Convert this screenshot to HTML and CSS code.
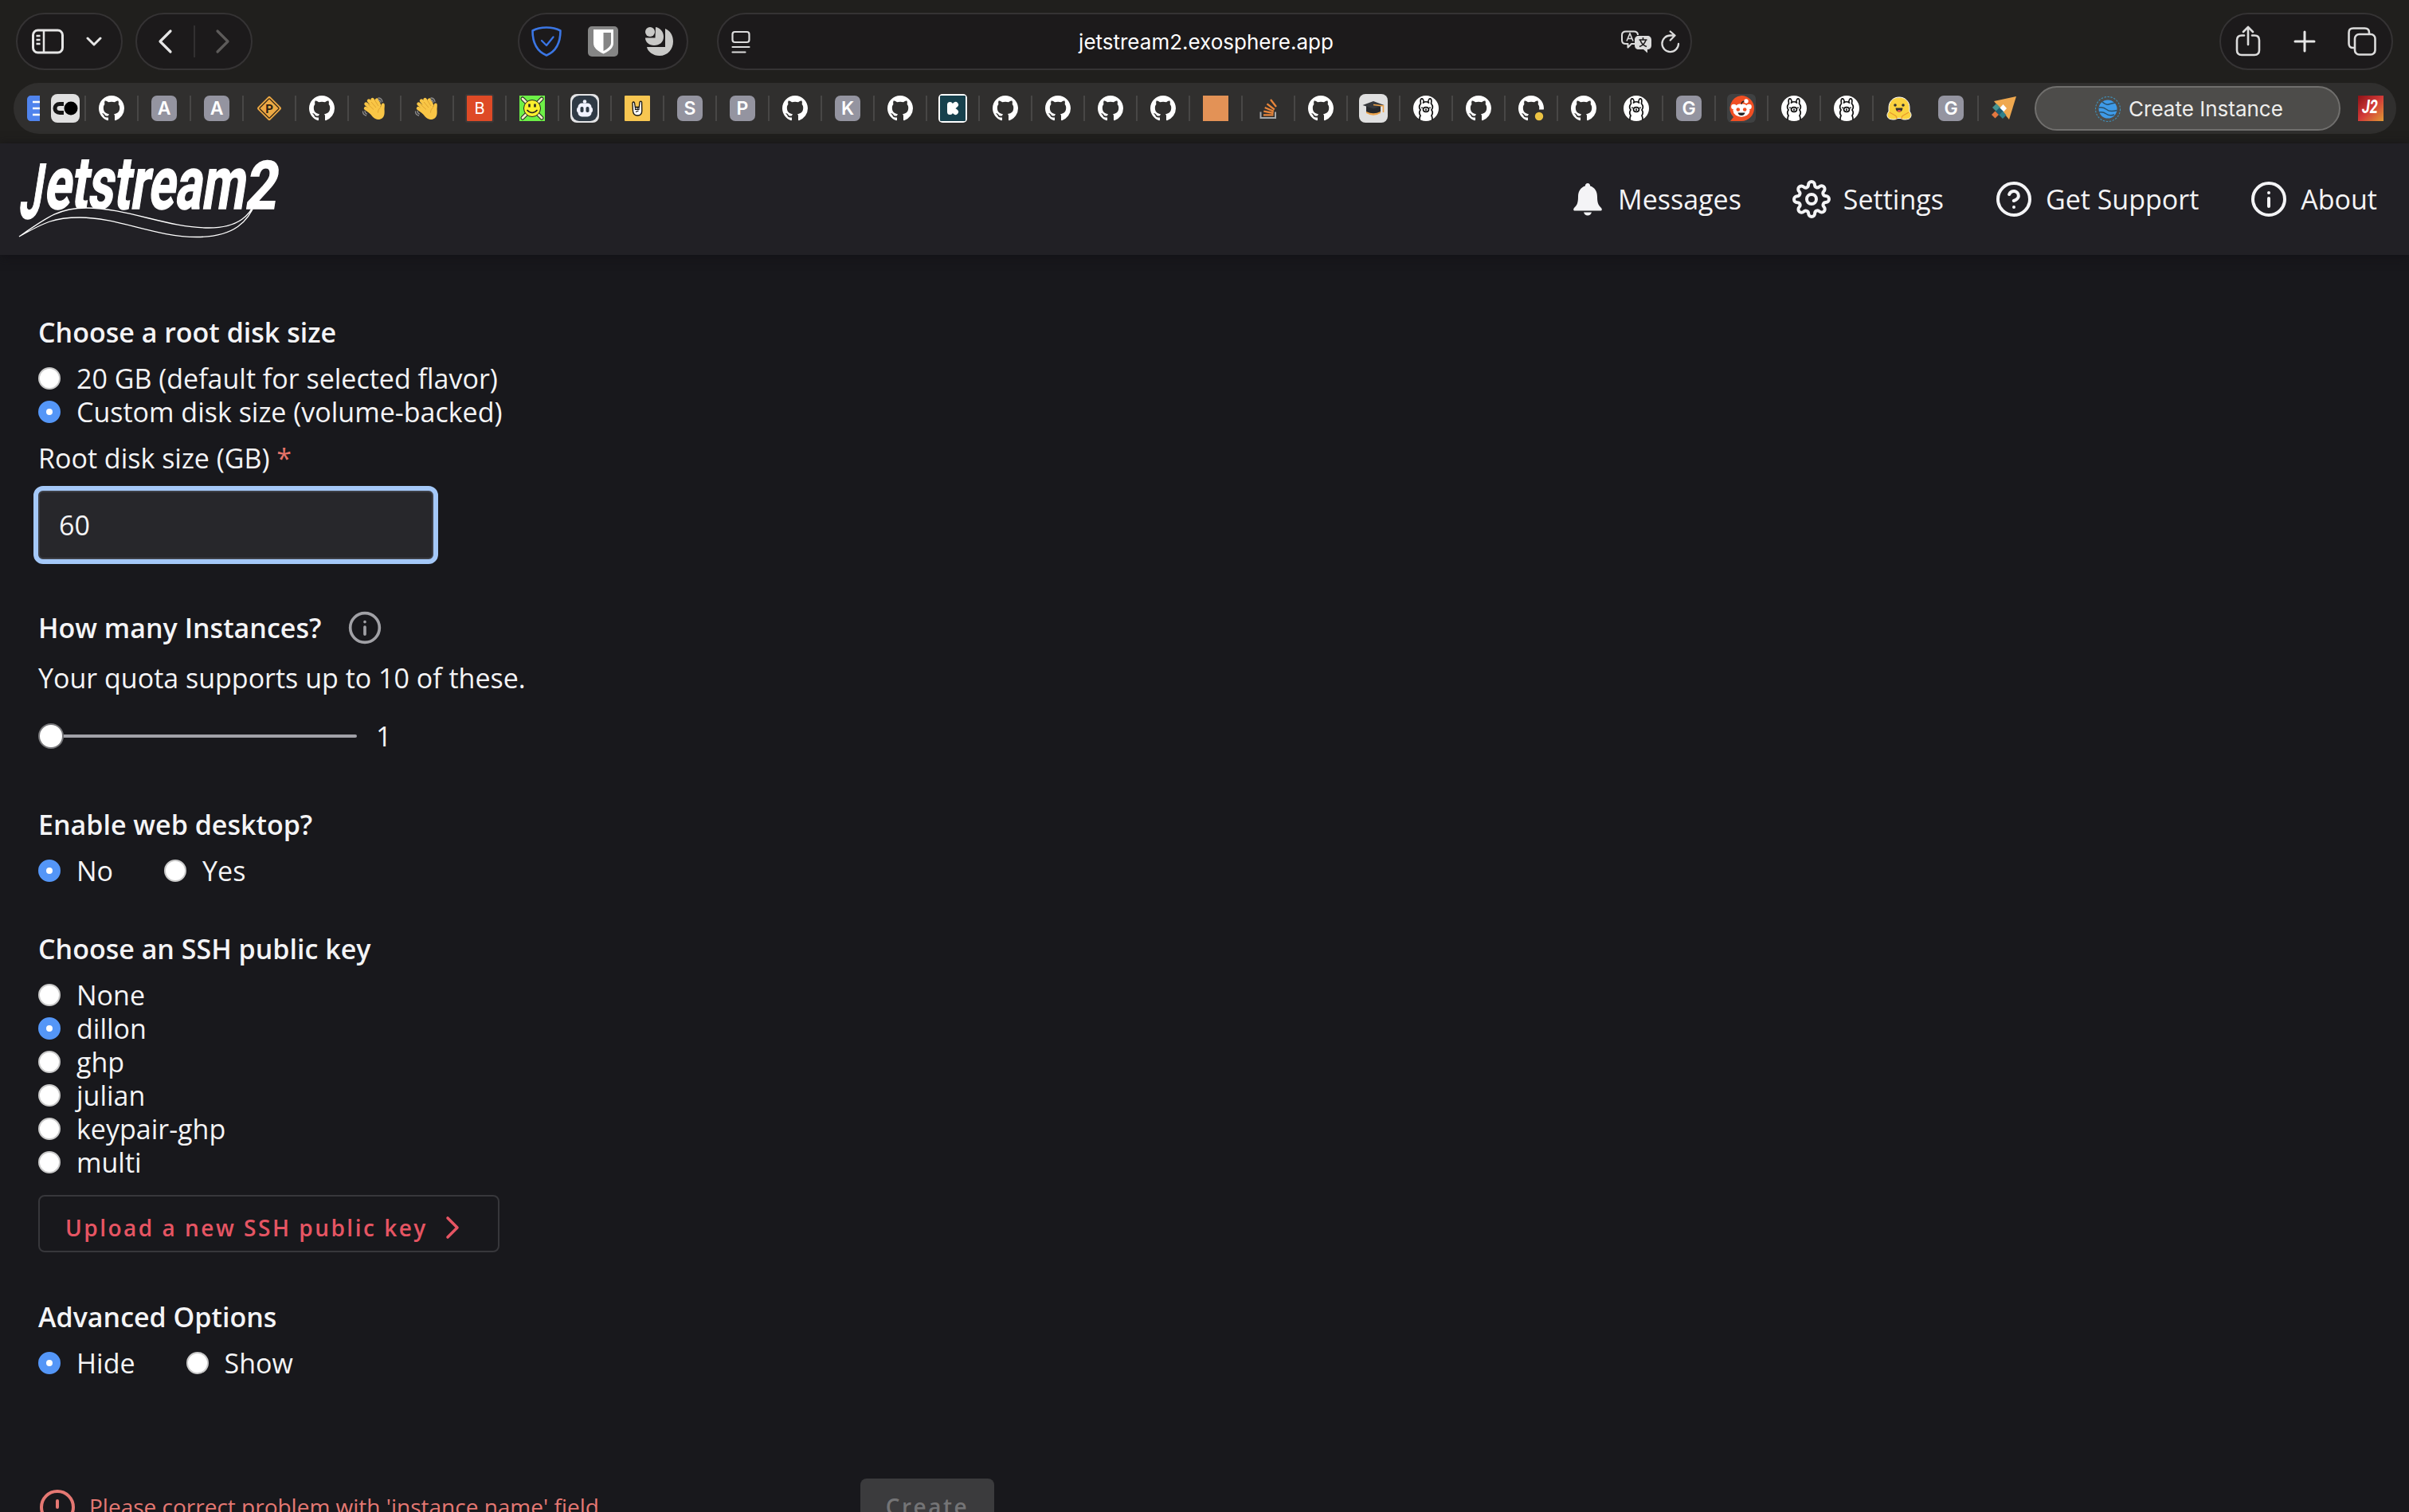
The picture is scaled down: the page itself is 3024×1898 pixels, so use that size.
FILE: index.html
```html
<!DOCTYPE html>
<html lang="en">
<head>
  <meta charset="utf-8">
  <title>Create Instance</title>
  <link rel="stylesheet" href="styles.css">
</head>
<body>
  <!-- shared icons -->
  <svg class="defs" width="0" height="0">
    <symbol id="github" viewBox="0 0 16 16"><path fill="#fff" d="M8 0C3.58 0 0 3.58 0 8c0 3.54 2.29 6.53 5.47 7.59.4.07.55-.17.55-.38 0-.19-.01-.82-.01-1.49-2.01.37-2.53-.49-2.69-.94-.09-.23-.48-.94-.82-1.13-.28-.15-.68-.52-.01-.53.63-.01 1.08.58 1.23.82.72 1.21 1.87.87 2.33.66.07-.52.28-.87.51-1.07-1.78-.2-3.64-.89-3.64-3.95 0-.87.31-1.59.82-2.15-.08-.2-.36-1.02.08-2.12 0 0 .67-.21 2.2.82.64-.18 1.32-.27 2-.27s1.36.09 2 .27c1.53-1.04 2.2-.82 2.2-.82.44 1.1.16 1.92.08 2.12.51.56.82 1.27.82 2.15 0 3.07-1.87 3.75-3.65 3.95.29.25.54.73.54 1.48 0 1.07-.01 1.93-.01 2.2 0 .21.15.46.55.38A8.01 8.01 0 0 0 16 8c0-4.42-3.58-8-8-8z"/></symbol>
    <symbol id="wave" viewBox="0 0 32 32">
      <path fill="none" stroke="#f9c646" stroke-width="4.400" stroke-linecap="round" d="M13.500 17L5.500 10.500M16 14.500L9 6.500M19 12.500L13.500 5M22 12L19 5.500M12 21L5 16"/>
      <path fill="#f9c646" d="M10 17.500L20 8.500q3 2 4 6c.3-3 1-5 3-5s2 2 1.700 5c-.5 3 .3 5-.2 8.500C28 28 24 30.500 20 30c-5-.5-8-6-11-9z"/>
      <path fill="none" stroke="#d89a2c" stroke-width=".8" d="M8 11l7 6.500M12 8l6 7M16.500 6l4.500 7M24 14.500c-2.500 2-3.500 4-3.500 7"/>
      <path fill="none" stroke="#8b8b8b" stroke-width="1.300" stroke-linecap="round" d="M21 3q4 0 5 4.500M21 5.500q2.500 0 3 3M1.500 20q0 4 4 5M4 19.500q0 2.500 2.500 3.500"/>
    </symbol>
    <symbol id="llama" viewBox="0 0 32 32">
      <circle cx="16" cy="16" r="16" fill="#fff"/>
      <g fill="none" stroke="#111" stroke-width="1.700" stroke-linecap="round">
        <path d="M9.500 10C8.500 6 9.500 3.500 11 3.800s2.300 3 2 5.200M22.500 10c1-4 0-6.500-1.500-6.200s-2.300 3-2 5.200M12.500 9q3.500-2.500 7 0M9.500 10q-3.500 4-.5 8-2.500 3.500 0 7-1 2-1 5M22.500 10q3.500 4 .5 8 2.500 3.500 0 7 1 2 1 5"/>
        <ellipse cx="16" cy="17.500" rx="3.500" ry="2.800"/>
        <path d="M16 17v1.200M11 15.200v.1M21 15.200v.1"/>
      </g>
    </symbol>
    <symbol id="info" viewBox="0 0 24 24"><g fill="none" stroke="currentColor" stroke-width="2" stroke-linecap="round"><circle cx="12" cy="12" r="10"/><path d="M12 16.500v-5M12 8v.01"/></g></symbol>
  </svg>

  <!-- browser window -->
  <div class="toolbar">
    <div class="pill pill-sidebar">
      <svg width="40" height="32" viewBox="0 0 40 32" fill="none" stroke="#e6e6e6" stroke-width="3"><rect x="1.500" y="2" width="37" height="28" rx="6"/><path d="M15 2v28M5.500 9h5M5.500 14h5M5.500 19h5" stroke-width="2.500"/></svg>
      <svg width="20" height="14" viewBox="0 0 20 14" fill="none" stroke="#e6e6e6" stroke-width="3" stroke-linecap="round" stroke-linejoin="round"><path d="M2 3l8 8 8-8"/></svg>
    </div>
    <div class="pill pill-nav">
      <svg width="20" height="32" viewBox="0 0 20 32" fill="none" stroke="#e6e6e6" stroke-width="3.200" stroke-linecap="round" stroke-linejoin="round"><path d="M17 3L4 16l13 13"/></svg>
      <span class="pill-line"></span>
      <svg width="20" height="32" viewBox="0 0 20 32" fill="none" stroke="#5d5b5a" stroke-width="3.200" stroke-linecap="round" stroke-linejoin="round"><path d="M3 3l13 13L3 29"/></svg>
    </div>
    <div class="pill pill-ext">
      <svg width="38" height="38" viewBox="0 0 38 38" fill="none" stroke="#3b76e4" stroke-width="2.600" stroke-linejoin="round" stroke-linecap="round"><path d="M19 1.500c6 0 13 1.500 17.500 4C36.500 20 32 31 19 36.500 6 31 1.500 20 1.500 5.500 6 3 13 1.500 19 1.500z"/><path d="M13 18l6 6 8.500-10.500" stroke-width="2.300"/></svg>
      <svg width="38" height="38" viewBox="0 0 38 38"><rect width="38" height="38" rx="5" fill="#858585"/><path fill="#fff" d="M7 4h25v17c0 6-5 10-12.500 13.500C12 31 7 27 7 21z"/><path fill="#858585" d="M19.500 8H29v13c0 4-4 7-9.500 10z"/></svg>
      <svg width="38" height="38" viewBox="0 0 38 38" fill="#c9c9c7"><circle cx="7" cy="7" r="6"/><path d="M14 1c6 1 10 6 10 12 0 7-5 11-12 11C6 24 1 20 1 14.500h12.500z"/><path d="M26 3c7 3 10 9 10 16 0 10-7 18-17 18-8 0-15-5-16-11h23z"/></svg>
    </div>
    <div class="pill pill-url">
      <svg width="24" height="30" viewBox="0 0 24 30" fill="none" stroke="#dcdcdc" stroke-width="2.200" stroke-linecap="round"><rect x="1.500" y="2" width="21" height="13" rx="3"/><path d="M1.500 21h21M1.500 27.500h16"/></svg>
      <span class="url">jetstream2.exosphere.app</span>
      <div class="url-tools">
        <svg width="40" height="30" viewBox="0 0 40 30"><path fill="none" stroke="#dcdcdc" stroke-width="2" stroke-linejoin="round" d="M17 17h-4l-4.500 4.500V17H6c-3 0-5-1.500-5-4.500V6c0-3 2-4.500 5-4.500h10c3 0 5 1.500 5 4.500"/><path fill="none" stroke="#dcdcdc" stroke-width="1.600" d="M7 13.500l4-9.500 4 9.500M8.500 10.500h5"/><path fill="#dcdcdc" d="M22 7h11c3 0 5 2 5 5v7c0 3-2 5-5 5v4.500L28 24h-6c-3 0-5-2-5-5v-7c0-3 2-5 5-5z"/><path fill="none" stroke="#1d1b1c" stroke-width="1.600" d="M27.500 9v3M22.500 12h10M24 12.500c1.500 4 4.500 7 8 8M31 12.500c-1.500 4-4.500 7-8 8"/></svg>
        <svg width="24" height="30" viewBox="0 0 24 30" fill="none" stroke="#dcdcdc" stroke-width="2.300" stroke-linecap="round" stroke-linejoin="round"><path d="M22 17A10.300 10.300 0 1 1 11.700 6.500H17M11.700 1.500L17.500 6.500l-5.800 6"/></svg>
      </div>
    </div>
    <div class="pill pill-actions">
      <svg width="32" height="40" viewBox="0 0 32 40" fill="none" stroke="#dcdcdc" stroke-width="2.600" stroke-linecap="round" stroke-linejoin="round"><path d="M11 12.500H8c-4 0-6 2-6 6V31c0 4 2 6 6 6h16c4 0 6-2 6-6V18.500c0-4-2-6-6-6h-3M16 24V2M10 8l6-6.200L22 8"/></svg>
      <svg width="28" height="28" viewBox="0 0 28 28" stroke="#e6e6e6" stroke-width="3" stroke-linecap="round"><path d="M14 2v24M2 14h24"/></svg>
      <svg width="36" height="36" viewBox="0 0 36 36" fill="none" stroke="#dcdcdc" stroke-width="2.600"><path d="M9 26H7c-4 0-5.500-2-5.500-5.500V7C1.500 3.500 3 1.500 7 1.500h14.500c4 0 5.500 2 5.500 5.500v2"/><rect x="9" y="9" width="25.500" height="25.500" rx="5.500"/></svg>
    </div>
  </div>

  <div class="tabs">
    <svg class="tab-docs" width="16" height="32" viewBox="0 0 16 32"><path fill="#5084ed" d="M5 0h11v32H5c-3 0-5-2-5-5V5c0-3 2-5 5-5z"/><path stroke="#fff" stroke-width="2.500" d="M7 8h9M7 16h9M7 24h9"/></svg>
    <svg class="tab-co" width="36" height="36" viewBox="0 0 36 36"><rect width="36" height="36" rx="8" fill="#e0e0e0"/><path fill="none" stroke="#151515" stroke-width="5" d="M16 12.500h-5c-8 0-8 11 0 11h5"/><circle cx="25" cy="18" r="8.500" fill="#000"/></svg>

    <div class="tab"><svg width="32" height="32"><use href="#github"/></svg></div>
    <div class="tab"><span class="letter">A</span></div>
    <div class="tab"><span class="letter">A</span></div>
    <div class="tab"><svg width="32" height="32" viewBox="0 0 32 32"><rect x="4.800" y="4.800" width="22.400" height="22.400" rx="2" transform="rotate(45 16 16)" fill="#eda944"/><rect x="7.200" y="7.200" width="17.600" height="17.600" rx="1" transform="rotate(45 16 16)" fill="none" stroke="#382a18" stroke-width="1.200"/><text x="16" y="21.500" text-anchor="middle" class="t-road">P</text></svg></div>
    <div class="tab"><svg width="32" height="32"><use href="#github"/></svg></div>
    <div class="tab"><svg width="32" height="32"><use href="#wave"/></svg></div>
    <div class="tab"><svg width="32" height="32"><use href="#wave"/></svg></div>
    <div class="tab"><span class="letter letter-b">B</span></div>
    <div class="tab"><svg width="32" height="32" viewBox="0 0 32 32"><rect width="32" height="32" fill="#6df047"/><path stroke="#222" stroke-width="5" stroke-linecap="round" d="M4 4l24 24M28 4L4 28"/><path stroke="#f2f0c8" stroke-width="3" stroke-linecap="round" d="M4 4l24 24M28 4L4 28"/><circle cx="16" cy="16" r="10.500" fill="#fbf02e" stroke="#222" stroke-width="1"/><path stroke="#222" stroke-width="2.500" d="M12.500 10.500v4M19.500 10.500v4"/><path fill="none" stroke="#222" stroke-width="1.500" d="M9.500 18q6.500 7 13 0"/></svg></div>
    <div class="tab"><svg width="36" height="36" viewBox="0 0 36 36"><rect width="36" height="36" rx="8" fill="#e4e4e6"/><rect x="2" y="2" width="32" height="32" rx="9" fill="#2f3a45"/><circle cx="18" cy="9.500" r="2.300" fill="#f0f2ff"/><rect x="9.500" y="11.500" width="17" height="17" rx="5" fill="#f0f2ff"/><rect x="8" y="16.500" width="20" height="7" rx="3" fill="#f0f2ff"/><rect x="12.500" y="16" width="4" height="7" rx="1.800" fill="#2f3a45"/><rect x="19.500" y="16" width="4" height="7" rx="1.800" fill="#2f3a45"/></svg></div>
    <div class="tab"><svg width="32" height="32" viewBox="0 0 32 32"><rect width="32" height="32" rx="1" fill="#f7c651"/><path fill="#fff" stroke="#111" stroke-width="1.300" stroke-linejoin="round" d="M10 9q1.200-2 2.500 0l.8 5.500h5l.8-6.500q1.300-1.800 2.500 0l.2 11q0 6-5.500 6T10.500 19z"/><path fill="none" stroke="#111" stroke-width="1.200" d="M13.500 14.500v3h4.500v-3M16 14.500v3M14 20.500l3.500-1.500"/></svg></div>
    <div class="tab"><span class="letter">S</span></div>
    <div class="tab"><span class="letter">P</span></div>
    <div class="tab"><svg width="32" height="32"><use href="#github"/></svg></div>
    <div class="tab"><span class="letter">K</span></div>
    <div class="tab"><svg width="32" height="32"><use href="#github"/></svg></div>
    <div class="tab"><svg width="36" height="36" viewBox="0 0 36 36"><rect width="36" height="36" rx="5" fill="#fff"/><rect x="2" y="2" width="32" height="32" rx="1" fill="#17414d"/><path stroke="#fff" stroke-width="7" stroke-linecap="round" stroke-linejoin="round" d="M14.500 13.500v9M16 18l5.500-4.500M16 18l5.500 4.500"/></svg></div>
    <div class="tab"><svg width="32" height="32"><use href="#github"/></svg></div>
    <div class="tab"><svg width="32" height="32"><use href="#github"/></svg></div>
    <div class="tab"><svg width="32" height="32"><use href="#github"/></svg></div>
    <div class="tab"><svg width="32" height="32"><use href="#github"/></svg></div>
    <div class="tab"><span class="square"></span></div>
    <div class="tab"><svg width="32" height="32" viewBox="0 0 32 32" fill="none"><path stroke="#a5a8aa" stroke-width="2" d="M6.500 20.500V28H25v-7.500"/><path stroke="#e8853a" stroke-width="2.300" d="M10 24.300h12.500M10.300 19.700l12.300 2.300M11.700 15l11.200 4.700M14.500 10.300l9.300 7.200M19 5l7 9"/></svg></div>
    <div class="tab"><svg width="32" height="32"><use href="#github"/></svg></div>
    <div class="tab"><svg width="36" height="36" viewBox="0 0 36 36"><rect width="36" height="36" rx="8" fill="#e0e0e0"/><path fill="#eda34a" d="M9 20h18v4q-9 5.500-18 0z"/><path fill="#26282c" d="M9 15h18v7q-9 4.500-18 0z"/><path fill="#36383c" d="M18 9l13.500 5L18 18.500 4.500 14z"/><path fill="none" stroke="#eda34a" stroke-width="1.600" d="M18 13.500l12.500 1.500v8"/></svg></div>
    <div class="tab"><svg width="32" height="32"><use href="#llama"/></svg></div>
    <div class="tab"><svg width="32" height="32"><use href="#github"/></svg></div>
    <div class="tab"><svg width="32" height="32" viewBox="0 0 32 32"><use href="#github" width="32" height="32"/><rect x="19" y="17.500" width="13" height="14.500" fill="#302f2e"/><circle cx="26" cy="26" r="5.200" fill="#ecc443"/></svg></div>
    <div class="tab"><svg width="32" height="32"><use href="#github"/></svg></div>
    <div class="tab"><svg width="32" height="32"><use href="#llama"/></svg></div>
    <div class="tab"><span class="letter">G</span></div>
    <div class="tab"><svg width="36" height="36" viewBox="0 0 36 36"><rect width="36" height="36" rx="6" fill="#3f4142"/><path fill="#f04f23" d="M18 2a16 16 0 1 1 0 32H4l4-5A16 16 0 0 1 18 2z"/><circle cx="8.500" cy="16" r="3.300" fill="#fff"/><circle cx="27.500" cy="16" r="3.300" fill="#fff"/><ellipse cx="18" cy="20.500" rx="10.500" ry="8.300" fill="#fff"/><path fill="none" stroke="#222" stroke-width="1.300" d="M18 13q0-4 5-4"/><circle cx="24" cy="9" r="2.700" fill="#fff"/><circle cx="13.800" cy="19.500" r="2.300" fill="#f04f23"/><circle cx="22.200" cy="19.500" r="2.300" fill="#f04f23"/><path fill="#222" d="M13.500 23.500h9q-1 3.500-4.500 3.500t-4.500-3.500z"/></svg></div>
    <div class="tab"><svg width="32" height="32"><use href="#llama"/></svg></div>
    <div class="tab"><svg width="32" height="32"><use href="#llama"/></svg></div>
    <div class="tab"><svg width="32" height="32" viewBox="0 0 32 32"><path fill="#fbd33f" stroke="#fff" stroke-width="1" d="M16 2c8 0 13 6 13 13v5c3 3 2.500 7-.5 9-4 1.500-8 1.500-10.500-.5h-4c-2.500 2-6.500 2-10.500.5-3-2-3.500-6-.5-9v-5C3 8 8 2 16 2z"/><path fill="none" stroke="#e9982f" stroke-width="1.200" d="M4 21l7 4c3 2 2 4 1 4.500M28 21l-7 4c-3 2-2 4-1 4.500"/><circle cx="11" cy="12" r="1.800" fill="#333"/><circle cx="21" cy="12" r="1.800" fill="#333"/><path fill="#333" d="M11.500 15.500h9q-.5 5-4.500 5t-4.500-5z"/><path fill="#ee5a4f" d="M13.500 19q2.500-2 5 0-1 1.500-2.500 1.500T13.500 19z"/></svg></div>
    <div class="tab tab-plain"><span class="letter">G</span></div>
    <div class="tab"><svg width="34" height="32" viewBox="0 0 34 32"><path fill="#efa84f" d="M4 7l28-6-9 29z"/><path fill="#45938f" d="M7 10l5 5-5 5-5-5z"/><path fill="#fff" d="M15.500 11l4.500 5-4.500 5-4.500-5z"/><path fill="#1f5c70" d="M11 15l5 5-5 5-5-5z"/><path fill="#e27740" d="M5.500 19.500l4.500 4.500-4.500 4.500L1 24z"/><path fill="#2f7f8a" d="M15 19.500l4.500 5L15 29l-4.500-4.500z"/></svg></div>

    <div class="tab-active">
      <svg width="34" height="34" viewBox="0 0 34 34"><circle cx="17" cy="17" r="15.500" fill="none" stroke="#3f8fb8" stroke-width="1.100" stroke-dasharray="2.400 1.600"/><circle cx="17" cy="17" r="11.500" fill="#3f9be8"/><path fill="none" stroke="#28506c" stroke-width="1.500" d="M10 8q5 4 8 3t8-2M5.500 15q6-1 10 2.500t13 1M6 21q5-1 9 2t10 1"/></svg>
      <span>Create Instance</span>
    </div>
    <svg class="tab-last" width="32" height="32" viewBox="0 0 32 32"><defs><linearGradient id="j2" x1="0" y1="0" x2="1" y2="1"><stop offset="0" stop-color="#8c1116"/><stop offset=".5" stop-color="#d33a38"/><stop offset="1" stop-color="#e09a35"/></linearGradient></defs><rect width="32" height="32" fill="url(#j2)"/><text x="5" y="22" class="t-j2" textLength="20" lengthAdjust="spacingAndGlyphs">J2</text></svg>
  </div>

  <!-- app -->
  <header class="nav">
    <svg class="logo" width="344" height="104" viewBox="16 198 344 104">
      <g transform="translate(0 263) skewX(-9)" class="logo-text">
        <text x="24" y="11" font-size="96" textLength="28" lengthAdjust="spacingAndGlyphs">J</text>
        <text x="54" y="-1" font-size="93" textLength="252" lengthAdjust="spacingAndGlyphs">etstream</text>
        <text x="306" y="-1" font-size="84" textLength="40" lengthAdjust="spacingAndGlyphs">2</text>
      </g>
      <path fill="none" stroke="#212025" stroke-width="4" d="M60 275C80 264 92 263 108 263c52 0 102 25 154 25"/>
      <path fill="none" stroke="#fff" stroke-width="1.300" d="M24 297C60 272 75 261 108 261c52 0 102 25 154 25 38 0 53-16 61-38M24 297c32-18 44-24 76-24 48 0 95 24.500 147 24.500 46 0 66-18 76-49.500"/>
    </svg>
    <nav class="menu">
      <a class="menu-item"><svg width="48" height="48" viewBox="-8 -4 48 48" fill="currentColor"><path d="M18 0c-2 0-3 1.500-3.200 3.500C9 5.500 6 10 6 17c0 9-2 11-5 14-1.600 2-.6 3.500 1 3.500h32c1.600 0 2.600-1.500 1-3.500-3-3-5-5-5-14 0-7-3-11.500-8.800-13.500C21 1.500 20 0 18 0z"/><path d="M13 36.500h10c-.8 2.500-2.500 4-5 4s-4.200-1.500-5-4z"/></svg>Messages</a>
      <a class="menu-item"><svg width="48" height="48" viewBox="0 0 24 24" fill="none" stroke="currentColor" stroke-width="2" stroke-linecap="round" stroke-linejoin="round"><circle cx="12" cy="12" r="3"/><path d="M19.400 15a1.650 1.650 0 0 0 .33 1.820l.06.06a2 2 0 0 1 0 2.830 2 2 0 0 1-2.830 0l-.06-.06a1.650 1.650 0 0 0-1.820-.33 1.650 1.650 0 0 0-1 1.510V21a2 2 0 0 1-2 2 2 2 0 0 1-2-2v-.09A1.650 1.650 0 0 0 9 19.400a1.650 1.650 0 0 0-1.820.33l-.06.06a2 2 0 0 1-2.830 0 2 2 0 0 1 0-2.830l.06-.06a1.650 1.650 0 0 0 .33-1.820 1.650 1.650 0 0 0-1.510-1H3a2 2 0 0 1-2-2 2 2 0 0 1 2-2h.09A1.650 1.650 0 0 0 4.600 9a1.650 1.650 0 0 0-.33-1.820l-.06-.06a2 2 0 0 1 0-2.830 2 2 0 0 1 2.830 0l.06.06a1.650 1.650 0 0 0 1.820.33H9a1.650 1.650 0 0 0 1-1.510V3a2 2 0 0 1 2-2 2 2 0 0 1 2 2v.09a1.650 1.650 0 0 0 1 1.510 1.650 1.650 0 0 0 1.820-.33l.06-.06a2 2 0 0 1 2.830 0 2 2 0 0 1 0 2.830l-.06.06a1.650 1.650 0 0 0-.33 1.820V9a1.650 1.650 0 0 0 1.510 1H21a2 2 0 0 1 2 2 2 2 0 0 1-2 2h-.09a1.650 1.650 0 0 0-1.510 1z"/></svg>Settings</a>
      <a class="menu-item"><svg width="48" height="48" viewBox="0 0 24 24" fill="none" stroke="currentColor" stroke-width="2" stroke-linecap="round" stroke-linejoin="round"><circle cx="12" cy="12" r="10"/><path d="M9.090 9a3 3 0 0 1 5.830 1c0 2-3 3-3 3M12 17h.01"/></svg>Get Support</a>
      <a class="menu-item"><svg width="48" height="48"><use href="#info"/></svg>About</a>
    </nav>
  </header>

  <form class="form">
    <section class="group group-disk">
      <h2>Choose a root disk size</h2>
      <label class="option"><input type="radio" name="disk">20 GB (default for selected flavor)</label>
      <label class="option"><input type="radio" name="disk" checked>Custom disk size (volume-backed)</label>
      <label class="field-label" for="size">Root disk size (GB) <span class="required">*</span></label>
      <input type="text" id="size" class="size" value="60">
    </section>

    <section class="group group-count">
      <h2>How many Instances? <svg class="hint" width="44" height="44"><use href="#info"/></svg></h2>
      <p class="quota">Your quota supports up to 10 of these.</p>
      <div class="slider-row">
        <div class="slider"><span class="thumb"></span><span class="track"></span></div>
        <span>1</span>
      </div>
    </section>

    <section class="group group-desktop">
      <h2>Enable web desktop?</h2>
      <div class="inline">
        <label class="option"><input type="radio" name="desktop" checked>No</label>
        <label class="option"><input type="radio" name="desktop">Yes</label>
      </div>
    </section>

    <section class="group group-key">
      <h2>Choose an SSH public key</h2>
      <label class="option"><input type="radio" name="key">None</label>
      <label class="option"><input type="radio" name="key" checked>dillon</label>
      <label class="option"><input type="radio" name="key">ghp</label>
      <label class="option"><input type="radio" name="key">julian</label>
      <label class="option"><input type="radio" name="key">keypair-ghp</label>
      <label class="option"><input type="radio" name="key">multi</label>
      <button type="button" class="upload">Upload a new SSH public key
        <svg width="20" height="32" viewBox="0 0 20 32" fill="none" stroke="currentColor" stroke-width="3.600" stroke-linecap="round" stroke-linejoin="round"><path d="M3 4l12 12L3 28"/></svg>
      </button>
    </section>

    <section class="group">
      <h2>Advanced Options</h2>
      <div class="inline">
        <label class="option"><input type="radio" name="advanced" checked>Hide</label>
        <label class="option"><input type="radio" name="advanced">Show</label>
      </div>
    </section>

    <div class="submit">
      <div class="error">
        <svg width="48" height="48" viewBox="0 0 24 24" fill="none" stroke="currentColor" stroke-width="2" stroke-linecap="round"><circle cx="12" cy="12" r="10"/><path d="M12 8v4M12 16h.01"/></svg>
        <span>Please correct problem with 'instance name' field</span>
      </div>
      <button type="button" class="create" disabled>Create</button>
    </div>
  </form>
</body>
</html>
```
FILE: styles.css
```css
* {
  box-sizing: border-box;
}
html,
body {
  height: 1898px;
  overflow: hidden;
}
body {
  margin: 0;
  background: #18181c;
  color: #f4f4f6;
  font: 34px/42px "Open Sans", sans-serif;
}
svg {
  display: block;
  flex: none;
}
.defs {
  position: absolute;
}

/* browser toolbar */
.toolbar {
  display: flex;
  height: 104px;
  padding: 16px 20px 0;
  background: #201f1d;
}
.pill {
  display: flex;
  align-items: center;
  height: 72px;
  border: 2px solid #353334;
  border-radius: 36px;
  background: #1c1a1b;
}
.pill-sidebar {
  width: 134px;
  padding-left: 18px;
  gap: 28px;
}
.pill-nav {
  width: 147px;
  margin-left: 16px;
  padding: 0 25px;
  justify-content: space-between;
}
.pill-line {
  width: 2px;
  height: 40px;
  background: #323031;
}
.pill-ext {
  width: 214px;
  margin-left: 333px;
  padding: 0 15px;
  justify-content: space-between;
}
.pill-url {
  display: grid;
  grid-template-columns: 1fr auto 1fr;
  width: 1224px;
  margin-left: 36px;
  padding: 1px 13px 0 16px;
}
.url {
  padding: 1px 0 0 1px;
  color: #fff;
  font: 26px/32px Inter, sans-serif;
}
.url-tools {
  display: flex;
  justify-content: flex-end;
  gap: 10px;
}
.pill-actions {
  width: 218px;
  margin-left: auto;
  padding: 0 19px 0 18px;
  justify-content: space-between;
}

/* tab bar */
.tabs {
  display: flex;
  align-items: center;
  height: 64px;
  margin: 0 16px 0 17px;
  padding-left: 17px;
  border-radius: 32px;
  background: #302f2e;
  box-shadow: 0 0 0 40px #201f1d;
  clip-path: inset(0 -17px -12px);
}
.tab-co {
  margin: 0 6px 0 14px;
}
.tab {
  display: flex;
  flex: none;
  align-items: center;
  justify-content: center;
  width: 66px;
  height: 32px;
  border-left: 2px solid #484746;
}
.tab-plain {
  padding-right: 2px;
  border-left-color: transparent;
}
.letter {
  width: 32px;
  height: 32px;
  border-radius: 7px;
  background: #9494a0;
  color: #fff;
  font: 600 23px/33px Inter, sans-serif;
  text-align: center;
}
.letter-b {
  border-radius: 1px;
  background: #de4a26;
  font: 20px/33px Inter, sans-serif;
  box-shadow: 0 0 0 2px #3c3837;
}
.square {
  width: 32px;
  height: 32px;
  background: #e39256;
}
.t-road {
  font: bold 15px Roboto, sans-serif;
  fill: #2b2014;
}
.t-j2 {
  font: italic bold 23px Roboto, sans-serif;
  fill: #fff;
}
.tab-active {
  display: flex;
  flex: none;
  align-items: center;
  justify-content: center;
  gap: 9px;
  width: 384px;
  height: 56px;
  margin-left: 6px;
  padding: 1px 0 0 3px;
  border: 2px solid #706f6d;
  border-radius: 28px;
  background: #4d4c4a;
  color: #eeeeed;
  font: 26px/32px Inter, sans-serif;
}
.tab-last {
  margin-left: 22px;
}

/* app header */
.nav {
  position: relative;
  display: flex;
  align-items: center;
  justify-content: space-between;
  height: 140px;
  margin-top: 12px;
  padding: 0 40px 0 16px;
  background: #212025;
  box-shadow: 0 2px 12px #121116;
}
.logo {
  overflow: visible;
}
.logo-text {
  font-family: Roboto, sans-serif;
  font-weight: 700;
  fill: #fff;
  stroke: #fff;
  stroke-width: 1.5px;
}
.menu {
  display: flex;
  gap: 64px;
}
.menu-item {
  display: flex;
  align-items: center;
  gap: 16px;
}

/* form */
.form {
  padding: 76px 48px 0;
}
h2 {
  display: flex;
  align-items: center;
  height: 42px;
  margin: 0 0 16px;
  font-size: 34px;
  font-weight: 600;
}
.option {
  display: flex;
  align-items: center;
  gap: 20px;
}
input[type=radio] {
  appearance: none;
  width: 28px;
  height: 28px;
  margin: 0;
  border: 2px solid #c9c9c9;
  border-radius: 50%;
  background: #fff;
}
input[type=radio]:checked {
  border: 10px solid #5496f7;
}
.inline {
  display: flex;
  gap: 64px;
}
.field-label {
  display: block;
  margin: 16px 0 20px;
}
.required {
  color: #e57368;
}
.size {
  display: block;
  width: 496px;
  height: 86px;
  padding: 0 24px;
  border: 2px solid #3d3f46;
  border-radius: 6px;
  outline: 6px solid #a4c8f8;
  background: #27272b;
  color: inherit;
  font: inherit;
}
.group-disk {
  margin-bottom: 65px;
}
.group-count {
  margin-bottom: 69px;
}
.group-desktop {
  margin-bottom: 56px;
}
.group-key {
  margin-bottom: 60px;
}
.hint {
  margin-left: 33px;
  color: #a1a1a6;
}
.quota {
  margin: 21px 0 31px;
}
.slider-row {
  display: flex;
  gap: 24px;
}
.slider {
  display: flex;
  align-items: center;
  width: 400px;
}
.thumb {
  width: 32px;
  height: 32px;
  border: 2px solid #77777a;
  border-radius: 50%;
  background: #fff;
}
.track {
  flex: 1;
  height: 4px;
  border-radius: 0 2px 2px 0;
  background: #a1a1a8;
}
.upload {
  display: flex;
  align-items: center;
  gap: 22px;
  width: 579px;
  height: 72px;
  margin-top: 20px;
  padding: 9px 0 0 32px;
  border: 2px solid #37373b;
  border-radius: 8px;
  background: none;
  color: #e65563;
  font: 600 28px "Open Sans", sans-serif;
  letter-spacing: 2.5px;
}
.submit {
  display: flex;
  justify-content: space-between;
  width: 1200px;
  margin-top: 124px;
}
.error {
  display: flex;
  align-items: center;
  gap: 16px;
  height: 72px;
  color: #e57873;
  font-size: 28px;
}
.error span {
  padding-bottom: 2px;
}
.create {
  width: 168px;
  height: 72px;
  padding-bottom: 3px;
  border: 0;
  border-radius: 8px;
  background: #3b3b3d;
  color: #747476;
  font: 600 28px "Open Sans", sans-serif;
  letter-spacing: 2.5px;
}
```
